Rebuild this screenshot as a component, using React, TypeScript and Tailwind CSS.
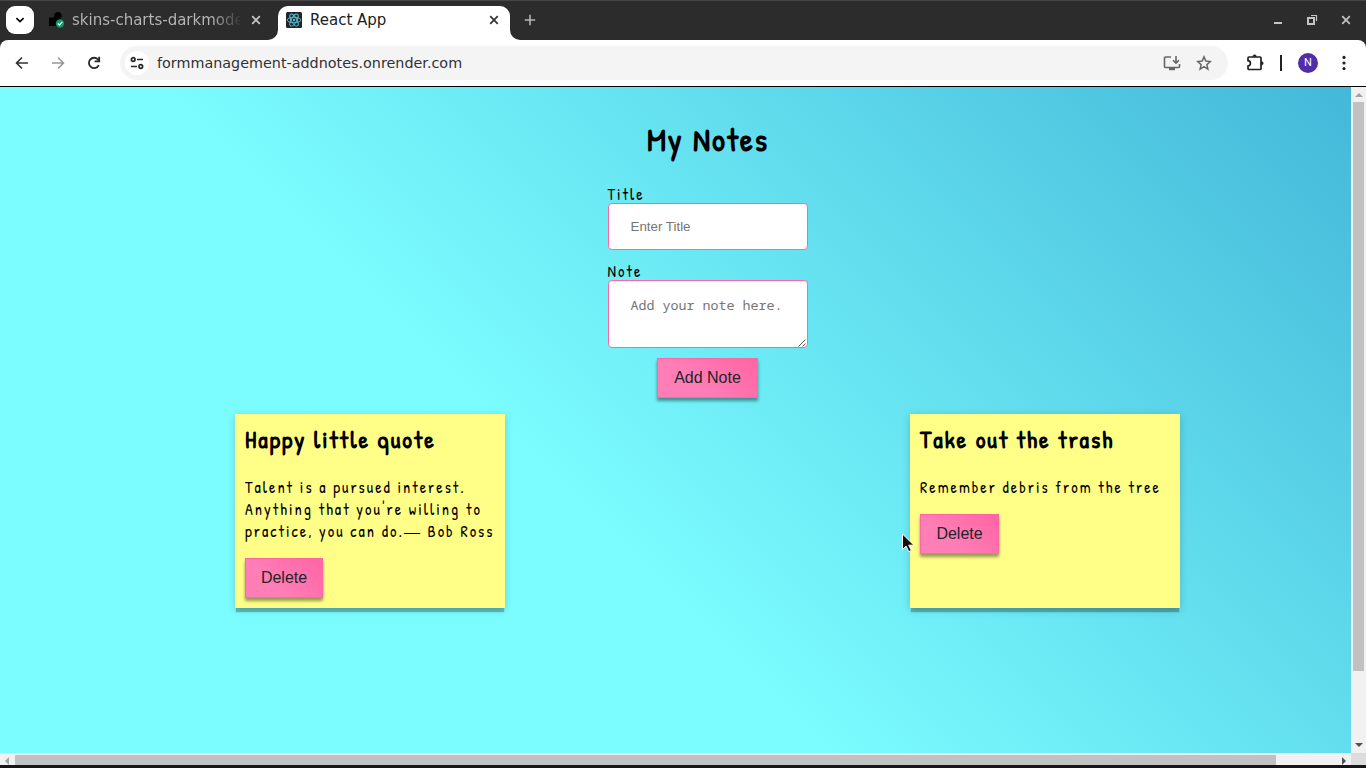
const titleText = "text-[24px] font-bold tracking-[2px]";
const bodyText = "text-[16px] leading-[22px] tracking-[2px]";

function PinkButton({ label, className }: { label: string; className: string }) {
  return (
    <button
      className={`block h-10 border border-[#ff66a8] bg-[linear-gradient(45deg,#ff7eb6_35%,#ff65a3)] font-['Liberation_Sans',sans-serif] text-base text-[#212529] shadow-[0_3px_3px_rgba(0,0,0,0.4)] ${className}`}
    >
      {label}
    </button>
  );
}

function Cross({ className }: { className: string }) {
  return (
    <svg viewBox="0 0 10 10" className={className} fill="none" stroke="currentColor" strokeWidth="1.7">
      <path d="M1.2 1.2 8.8 8.8M8.8 1.2 1.2 8.8" />
    </svg>
  );
}

function TabStrip() {
  return (
    <div className="flex h-10 items-center border-t border-[#454747] bg-[#2c2c2c]">
      <button className="mb-px ml-1.5 flex size-7 items-center justify-center rounded-[9px] bg-white text-black">
        <svg viewBox="0 0 10 10" className="size-[10px]" fill="none" stroke="currentColor" strokeWidth="1.6"><path d="M1.4 3.2 5 6.6 8.6 3.2" /></svg>
      </button>
      <svg viewBox="0 0 16 16" className="mb-px ml-[14px] size-4">
        <path d="M1 5.5h5.5A3.8 3.8 0 1 1 13 6l1 8H1z" fill="#000" />
        <circle cx="12" cy="11.5" r="4.2" fill="#0d9668" />
        <path d="m9.8 11.5 1.6 1.6 2.8-3.2" fill="none" stroke="#fff" strokeWidth="1.4" />
      </svg>
      <div className="mb-px ml-2 w-[168px] overflow-hidden bg-[linear-gradient(90deg,#b8b8b8_140px,#2c2c2c_170px)] bg-clip-text text-[15px] whitespace-nowrap text-transparent">
        skins-charts-darkmode
      </div>
      <Cross className="mb-px ml-[11px] size-[10px] text-[#c8c8c8]" />
      <div className="relative ml-[17px] flex h-[34px] w-[232px] items-center self-end rounded-t-[10px] bg-white">
        <svg viewBox="0 0 10 10" className="absolute bottom-0 -left-2.5 size-2.5"><path d="M0 10A10 10 0 0 0 10 0V10z" fill="#fff" /></svg>
        <svg viewBox="0 0 10 10" className="absolute -right-2.5 bottom-0 size-2.5"><path d="M10 10A10 10 0 0 1 0 0V10z" fill="#fff" /></svg>
        <svg viewBox="0 0 16 16" className="mb-[6px] ml-2 size-4" fill="none" stroke="#58c4dc" strokeWidth="0.9">
          <rect width="16" height="16" rx="1.5" fill="#20232a" stroke="none" />
          <ellipse cx="8" cy="8" rx="6.8" ry="2.7" />
          <ellipse cx="8" cy="8" rx="6.8" ry="2.7" transform="rotate(60 8 8)" />
          <ellipse cx="8" cy="8" rx="6.8" ry="2.7" transform="rotate(120 8 8)" />
          <circle cx="8" cy="8" r="1.2" fill="#58c4dc" stroke="none" />
        </svg>
        <span className="mb-[6px] ml-2 w-[179px] text-[15px] text-[#202124]">React App</span>
        <Cross className="mb-[6px] size-[10px] text-[#333]" />
      </div>
      <svg viewBox="0 0 12 12" className="mb-px ml-[14px] size-3 shrink-0" stroke="#b5b5b5" strokeWidth="1.6"><path d="M6 .8v10.4M.8 6h10.4" /></svg>
      <div className="mr-[15px] mb-px ml-auto flex items-center">
        <svg viewBox="0 0 10 10" className="size-[10px]"><path d="M1 7h8v2H1z" fill="#c4c4c4" /></svg>
        <svg viewBox="0 0 12 12" className="ml-[23px] size-3" fill="none" stroke="#c4c4c4"><path d="M2 4h6v6H2z" strokeWidth="2" /><path d="M5 1.5h5.5V7" strokeWidth="1.2" /></svg>
        <Cross className="ml-[23px] size-[10px] text-[#c4c4c4]" />
      </div>
    </div>
  );
}

function Toolbar() {
  return (
    <div className="h-[47px] bg-[#2c2c2c]">
      <div className="flex h-full items-center rounded-t-[8px] border-b border-black bg-white text-[#202124]">
        <svg viewBox="0 0 14 14" className="ml-[15px] size-[14px]" fill="none" stroke="#303236" strokeWidth="1.6"><path d="M13 7H2M7 1.5 1.5 7 7 12.5" /></svg>
        <svg viewBox="0 0 14 14" className="ml-[22px] size-[14px]" fill="none" stroke="#96979a" strokeWidth="1.6"><path d="M1 7h11M7 1.5 12.5 7 7 12.5" /></svg>
        <svg viewBox="0 0 14 14" className="ml-[22px] size-[14px]" fill="none" stroke="#26282b" strokeWidth="1.8"><path d="M11.8 9.2A5.2 5.2 0 1 1 11 3.5l1 1.3M12.2.8v4.6H7.6" /></svg>
        <div className="ml-[19px] flex h-[34px] w-[1108px] items-center rounded-full bg-[#f4f4f4]">
          <span className="ml-[5px] flex size-6 items-center justify-center rounded-full bg-white">
            <svg viewBox="0 0 14 14" className="size-[14px]" fill="none" stroke="#26282b" strokeWidth="1.7"><circle cx="3.2" cy="3.5" r="1.8" /><path d="M7 3.5h6M1 10.5h6" /><circle cx="10.8" cy="10.5" r="1.8" /></svg>
          </span>
          <span className="mt-0.5 ml-2 text-[14.35px] text-[#303134]">formmanagement-addnotes.onrender.com</span>
          <svg viewBox="0 0 18 16" className="ml-auto h-4 w-[18px]" fill="none" stroke="#666" strokeWidth="1.6"><path d="M8 2H2.5q-1 0-1 1v8.5q0 1 1 1h13q1 0 1-1V9M13 1v7M10 5.2l3 3 3-3" /><path d="M6 14h6" strokeWidth="2.4" /></svg>
          <svg viewBox="0 0 16 16" className="mr-4 ml-[15px] size-4" fill="none" stroke="#666" strokeWidth="1.5"><path d="m8 1.8 1.8 4.3 4.6.4-3.5 3.1 1 4.5L8 11.7l-3.9 2.4 1-4.5-3.5-3.1 4.6-.4z" /></svg>
        </div>
        <svg viewBox="0 0 18 18" className="ml-[18px] size-[18px]"><path d="M2 4q0-1 1-1h11q1 0 1 1v10.5q0 1-1 1H3q-1 0-1-1V12q2.4-.2 2.4-2.7T2 6.6z" fill="none" stroke="#202124" strokeWidth="1.7" /><path d="M6.8 2.6a1.8 1.8 0 0 1 3.6 0zM15.4 7.5a1.8 1.8 0 0 1 0 3.6z" fill="#202124" stroke="#202124" strokeWidth=".6" /></svg>
        <div className="ml-[16px] h-4 w-0.5 bg-[#202124]" />
        <div className="ml-4 flex size-5 items-center justify-center rounded-full bg-[#512da8] font-['Roboto',sans-serif] text-[11px] text-white">N</div>
        <svg viewBox="0 0 4 16" className="ml-[24px] h-4 w-1" fill="#202124"><circle cx="2" cy="2.4" r="1.6" /><circle cx="2" cy="8" r="1.6" /><circle cx="2" cy="13.6" r="1.6" /></svg>
      </div>
    </div>
  );
}

const card = "h-[194px] w-[270px] bg-[#ffff88] px-[10px] pt-[9px] shadow-[0_5px_1px_-1px_rgba(0,0,0,0.25),0_2px_8px_rgba(0,0,0,0.18)]";

function Notes() {
  return (
    <main className="h-[666px] w-[1351px] overflow-hidden">
      <div className="flex h-[744px] w-[1415px] flex-col items-center bg-[linear-gradient(45deg,#7bfdff_41.5%,#41b4d7)] font-['Patrick_Hand','Open_Sans',sans-serif] text-black">
        <h1 className="mt-[31px] h-[44px] pl-px text-[32px] leading-[44px] font-bold tracking-[2px]">My Notes</h1>
        <form className="mt-[21px] w-[200px]">
          <label className={`block h-[22px] ${bodyText}`}>Title</label>
          <div className="mt-[-2px] flex h-[47px] items-center rounded-[4px] border border-[#ff66a8] bg-white pl-[22px] font-['Liberation_Sans',sans-serif] text-[13.333px] text-[#757575]">Enter Title</div>
          <label className={`mt-[10px] block h-[22px] ${bodyText}`}>Note</label>
          <div className="relative mt-[-2px] h-[68px] rounded-[4px] border border-[#ff66a8] bg-white pt-[15px] pl-[22px] font-['Noto_Sans_Mono','DejaVu_Sans_Mono',monospace] text-[13.333px] leading-[18px] text-[#757575]">
            Add your note here.
            <svg viewBox="0 0 9 9" className="absolute right-0 bottom-0 size-[9px]" stroke="#444" strokeWidth="0.9"><path d="M.5 8.5l7-7M4.5 8.5l3-3" /></svg>
          </div>
        </form>
        <PinkButton label="Add Note" className="mt-[10px] w-[101px]" />
        <section className="mt-4 flex w-[945px] justify-between">
          <article className={card}>
            <h2 className={`h-[33px] leading-[33px] ${titleText}`}>Happy little quote</h2>
            <p className={`mt-[20px] whitespace-nowrap ${bodyText}`}>
              Talent is a pursued interest.<br />
              Anything that you're willing to<br />
              practice, you can do.<span className="font-['Liberation_Serif',serif] leading-none">—</span> Bob Ross
            </p>
            <PinkButton label="Delete" className="mt-[16px] w-[78px]" />
          </article>
          <article className={card}>
            <h2 className={`h-[33px] leading-[33px] ${titleText}`}>Take out the trash</h2>
            <p className={`mt-[20px] whitespace-nowrap ${bodyText}`}>Remember debris from the tree</p>
            <PinkButton label="Delete" className="mt-[16px] w-[79px]" />
          </article>
        </section>
      </div>
    </main>
  );
}

export default function App() {
  return (
    <div className="relative flex h-[768px] w-[1366px] flex-col overflow-hidden bg-[#171517] font-['DejaVu_Sans',sans-serif]">
      <TabStrip />
      <Toolbar />
      <div className="flex h-[666px]">
        <Notes />
        <div className="flex w-[15px] flex-col items-center bg-[#f1f1f1]">
          <svg viewBox="0 0 8 4" className="mt-[6px] h-1 w-2" fill="#a3a3a3"><path d="M4 0 8 4H0z" /></svg>
          <div className="mt-[5px] h-[569px] w-[11px] bg-[#c1c1c1]" />
          <svg viewBox="0 0 8 4" className="mt-auto mb-[6px] h-1 w-2" fill="#505050"><path d="M0 0h8L4 4z" /></svg>
        </div>
      </div>
      <div className="flex h-3 items-center bg-[#f1f1f1]">
        <svg viewBox="0 0 4 8" className="mt-[3px] ml-[5px] h-2 w-1" fill="#a3a3a3"><path d="M4 0v8L0 4z" /></svg>
        <div className="ml-[6px] h-[10px] w-[1261px] self-end bg-[#c1c1c1]" />
        <svg viewBox="0 0 4 8" className="mt-[3px] ml-auto h-2 w-1" fill="#505050"><path d="M0 0v8l4-4z" /></svg>
        <div className="ml-[5px] h-full w-[15px] bg-[#dcdcdc]" />
      </div>
      <svg viewBox="0 0 14 20" className="absolute top-[533px] left-[901px] h-5 w-3.5"><path d="M1.5 1v15.5l3.6-3.4 2.7 5.6 2.6-1.3-2.7-5.2h5.2z" fill="#111" stroke="#fff" strokeWidth="1" /></svg>
    </div>
  );
}
